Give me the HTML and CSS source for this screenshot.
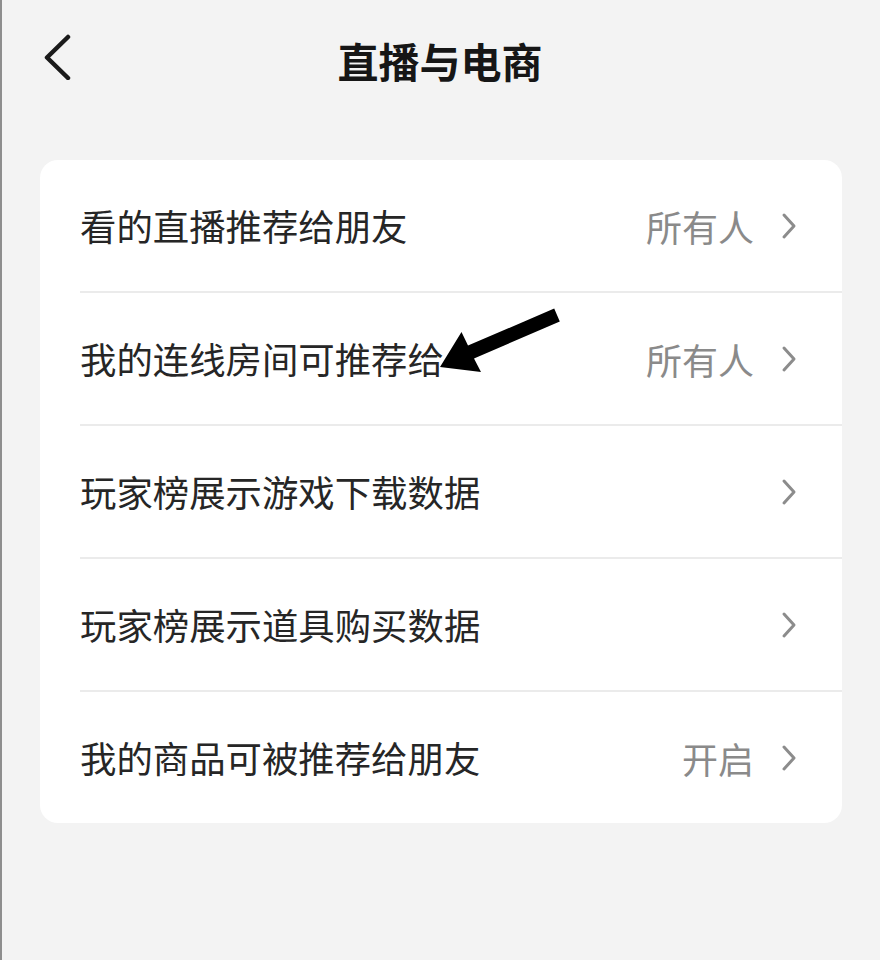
FILE: index.html
```html
<!DOCTYPE html>
<html lang="zh-CN">
<head>
<meta charset="utf-8">
<title>直播与电商</title>
<link rel="stylesheet" href="styles.css">
</head>
<body>
<div class="page">
  <header class="header">
    <svg class="back" width="40" height="60" viewBox="0 0 40 60" aria-hidden="true">
      <polyline points="28,17 7,37.5 28,58" fill="none" stroke="#1a1a1a" stroke-width="4.5" stroke-linecap="round" stroke-linejoin="round"/>
    </svg>
    <h1 class="title">直播与电商</h1>
  </header>
  <section class="card">
    <div class="row">
      <span class="label">看的直播推荐给朋友</span>
      <span class="value">所有人</span>
      <svg class="chev" width="18" height="28" viewBox="0 0 18 28" aria-hidden="true"><polyline points="4,3 14,14 4,25" fill="none" stroke="#8c8c8c" stroke-width="3" stroke-linecap="round" stroke-linejoin="round"/></svg>
    </div>
    <div class="row">
      <span class="label">我的连线房间可推荐给</span>
      <span class="value">所有人</span>
      <svg class="chev" width="18" height="28" viewBox="0 0 18 28" aria-hidden="true"><polyline points="4,3 14,14 4,25" fill="none" stroke="#8c8c8c" stroke-width="3" stroke-linecap="round" stroke-linejoin="round"/></svg>
    </div>
    <div class="row">
      <span class="label">玩家榜展示游戏下载数据</span>
      <svg class="chev" width="18" height="28" viewBox="0 0 18 28" aria-hidden="true"><polyline points="4,3 14,14 4,25" fill="none" stroke="#8c8c8c" stroke-width="3" stroke-linecap="round" stroke-linejoin="round"/></svg>
    </div>
    <div class="row">
      <span class="label">玩家榜展示道具购买数据</span>
      <svg class="chev" width="18" height="28" viewBox="0 0 18 28" aria-hidden="true"><polyline points="4,3 14,14 4,25" fill="none" stroke="#8c8c8c" stroke-width="3" stroke-linecap="round" stroke-linejoin="round"/></svg>
    </div>
    <div class="row">
      <span class="label">我的商品可被推荐给朋友</span>
      <span class="value">开启</span>
      <svg class="chev" width="18" height="28" viewBox="0 0 18 28" aria-hidden="true"><polyline points="4,3 14,14 4,25" fill="none" stroke="#8c8c8c" stroke-width="3" stroke-linecap="round" stroke-linejoin="round"/></svg>
    </div>
  </section>
  <svg class="arrow" width="880" height="960" viewBox="0 0 880 960" aria-hidden="true">
    <polygon points="554.2,308.6 559.8,321.4 474,358.5 481,372 440,367 461.5,332 468,345.5" fill="#000"/>
  </svg>
</div>
</body>
</html>
```

FILE: styles.css
```css
html, body {
  margin: 0;
  padding: 0;
  background: #f3f3f3;
}
.page {
  position: relative;
  width: 878px;
  height: 960px;
  border-left: 2px solid #8e8e8e;
  background: #f3f3f3;
  font-family: "Noto Sans CJK SC", "Noto Sans", sans-serif;
  overflow: hidden;
}
.header {
  position: relative;
  height: 120px;
  display: flex;
  align-items: center;
  justify-content: center;
}
.back {
  position: absolute;
  left: 38px;
  top: 20px;
}
.title {
  margin: 0 0 0 -2px;
  font-size: 41px;
  font-weight: 700;
  color: #161616;
}
.card {
  margin: 40px 0 0 38px;
  width: 802px;
  background: #fff;
  border-radius: 18px;
  overflow: hidden;
}
.row {
  height: 131px;
  margin-left: 40px;
  padding-right: 44px;
  display: flex;
  align-items: center;
  border-bottom: 2px solid #ebebeb;
}
.row:last-child {
  border-bottom: none;
}
.label {
  flex: 1;
  font-size: 36.4px;
  color: #262626;
  line-height: 1;
}
.value {
  font-size: 36px;
  color: #8a8a8a;
  line-height: 1;
  margin-right: 26px;
}
.chev {
  display: block;
}
.arrow {
  position: absolute;
  left: -2px;
  top: 0;
  pointer-events: none;
}
```
